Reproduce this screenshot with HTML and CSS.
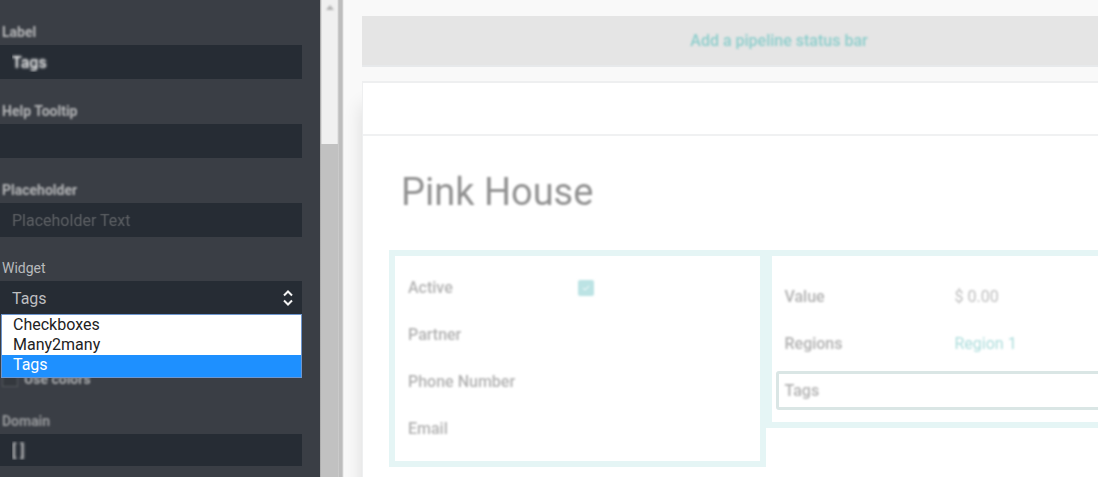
FILE: index.html
```html
<!DOCTYPE html>
<html lang="en">
<head>
<meta charset="utf-8">
<title>Form editor</title>
<link rel="stylesheet" href="styles.css">
</head>
<body>
<div class="app">
  <aside class="sidebar">
    <form class="fields">
      <div class="field soft">
        <label for="label">Label</label>
        <input id="label" class="control" type="text" value="Tags">
      </div>
      <div class="field soft">
        <label for="help">Help Tooltip</label>
        <input id="help" class="control" type="text">
      </div>
      <div class="field soft">
        <label for="placeholder">Placeholder</label>
        <input id="placeholder" class="control light" type="text" placeholder="Placeholder Text">
      </div>
      <div class="field active">
        <label for="widget">Widget</label>
        <div class="select">
          <select id="widget" class="control">
            <option>Checkboxes</option>
            <option>Many2many</option>
            <option selected>Tags</option>
          </select>
          <svg class="arrows" viewBox="0 0 12 18" aria-hidden="true"><path d="M2 6.500 6 2.500l4 4M2 11.500l4 4 4-4"/></svg>
          <ul class="menu" role="listbox" aria-label="Widget">
            <li role="option">Checkboxes</li>
            <li role="option">Many2many</li>
            <li role="option" class="chosen" aria-selected="true">Tags</li>
          </ul>
        </div>
      </div>
      <div class="check">
        <input id="colors" type="checkbox">
        <label for="colors">Use colors</label>
      </div>
      <div class="field soft dim">
        <label for="domain">Domain</label>
        <input id="domain" class="control" type="text" value="[ ]">
      </div>
    </form>
  </aside>
  <div class="scrollbar">
    <svg class="up" viewBox="0 0 8 5" aria-hidden="true"><path d="M0 5 4 0l4 5z"/></svg>
    <div class="thumb"></div>
  </div>
  <main class="main">
    <div class="record">
      <button class="status" type="button"><span>Add a pipeline status bar</span></button>
      <section class="sheet">
        <div class="buttons"></div>
        <div class="body">
          <h1>Pink House</h1>
          <div class="groups">
            <div class="group">
              <div class="row"><label for="active">Active</label>
                <span class="tick"><input id="active" type="checkbox" checked><svg viewBox="0 0 16 16" aria-hidden="true"><path d="m5 8 2 2 4-4"/></svg></span></div>
              <div class="row"><b>Partner</b></div>
              <div class="row"><b>Phone Number</b></div>
              <div class="row"><b>Email</b></div>
            </div>
            <div class="group second">
              <div class="row"><b>Value</b><span class="value">$ 0.00</span></div>
              <div class="row"><b>Regions</b><a class="value" href="#">Region 1</a></div>
              <div class="row selected"><b>Tags</b></div>
            </div>
          </div>
        </div>
      </section>
    </div>
  </main>
</div>
</body>
</html>
```

FILE: styles.css
```css
* { box-sizing: border-box; }
body { margin: 0; font-family: Roboto, "Liberation Sans", sans-serif; font-size: 16px; }
.app { display: flex; height: 100vh; overflow: hidden; background: #f9f9f9; }

.sidebar { flex: 0 0 320px; padding: 23px 18px 0 0; overflow: hidden; background: #3a3e45; }
.fields { display: flex; flex-direction: column; gap: 23px; }
.field { display: flex; flex-direction: column; gap: 4px; }
.field label { padding-left: 2px; font-size: 15px; line-height: 18px; color: #b8babc; }
.field.soft label { font-size: 14px; font-weight: 700; color: #b4b5b7; filter: blur(1px); }
.field.active { margin-top: -1px; }
.field.active label { font-size: 14px; }
.control { display: block; width: 100%; height: 34px; padding: 0 12px; border: 0; border-radius: 0; background: #262c34; color: #bdbec0; font: inherit; outline: 0; appearance: none; }
.soft .control { color: transparent; font-weight: 500; text-shadow: 0 0 3px #fff; }
.soft .light { font-weight: 400; text-shadow: none; }
.light::placeholder { color: transparent; text-shadow: 0 0 1px #5c5f63; }
.field.dim label { color: #97999c; }
.soft.dim .control { height: 32px; text-shadow: 0 0 3px #ddd; }

.select { position: relative; }
.arrows { position: absolute; right: 8px; top: 8px; width: 12px; height: 18px; fill: none; stroke: #f4f4f4; stroke-width: 2; pointer-events: none; }
.menu { position: absolute; z-index: 1; top: 33px; left: 1px; right: 0; margin: 0; padding: 0; list-style: none; background: #fff; border: 1px solid #6d96cf; color: #222; }
.menu li { height: 20px; padding-left: 11px; line-height: 20px; }
.menu .chosen { height: 22px; background: #1e90ff; color: #fff; }

.check { display: flex; align-items: center; gap: 6px; height: 20px; margin-top: 31px; filter: blur(1px); }
.check input { width: 16px; height: 16px; margin: 0 0 0 2px; border: 1px solid #55595f; background: #34383e; appearance: none; }
.check label { font-size: 14px; font-weight: 700; color: #a9abad; }

.scrollbar { flex: 0 0 24px; display: flex; flex-direction: column; align-items: center; padding: 5px 6px 0 1px; background: linear-gradient(90deg, #999 0, #f0f0f0 2px, #f0f0f0 17px, #bdbdbd 19px, #bdbdbd 22px, #fdfdfd 24px); }
.up { width: 8px; height: 5px; fill: #b2b2b2; filter: blur(1px); }
.thumb { width: 17px; flex: 1; margin-top: 134px; background: #c1c1c1; }

.main { flex: 1; min-width: 0; overflow: hidden; }
.record { display: flex; flex-direction: column; gap: 14px; height: 100%; margin-right: -98px; padding: 16px 0 0 18px; }
.status { flex: 0 0 51px; border: 0; border-bottom: 2px solid #e7e9eb; background: #e5e5e5; color: #8ccdcb; font: 500 16px Roboto, sans-serif; }
.status span { display: block; filter: blur(1px); }
.sheet { flex: 1; border: 1px solid #eeeff0; border-width: 2px 2px 0 1px; background: #fff; box-shadow: 0 24px 18px rgba(0, 0, 0, .12); }
.buttons { height: 53px; border-bottom: 2px solid #f0f1f2; }
.body { padding: 32px 52px 24px 26px; }
h1 { margin: 0 0 34px; padding-left: 12px; font-size: 38px; line-height: 48px; font-weight: 400; color: #919191; filter: blur(1px); }
.groups { display: grid; grid-template-columns: 1fr 1fr; align-items: start; }
.group { padding: 8px 4px 9px; border: 6px solid #e5f5f5; }
.second { padding: 17px 4px 8px; }
.row { display: flex; align-items: center; height: 47px; padding-left: 9px; }
.row b, .row label { flex: 0 0 170px; font-weight: 500; color: #b1b1b1; filter: blur(1px); }
.value { color: #bdbdbd; text-decoration: none; filter: blur(1px); }
a.value { color: #abdcdb; }
.selected { height: 39px; margin: 4px 0; padding-left: 6px; border: 3px solid #dae6e5; border-radius: 3px; }
.tick { position: relative; display: block; width: 16px; height: 16px; filter: blur(1px); }
.tick input { display: block; width: 16px; height: 16px; margin: 0; border-radius: 2px; background: #bce3e4; appearance: none; }
.tick svg { position: absolute; inset: 0; fill: none; stroke: #fff; stroke-width: 1; pointer-events: none; }
```
